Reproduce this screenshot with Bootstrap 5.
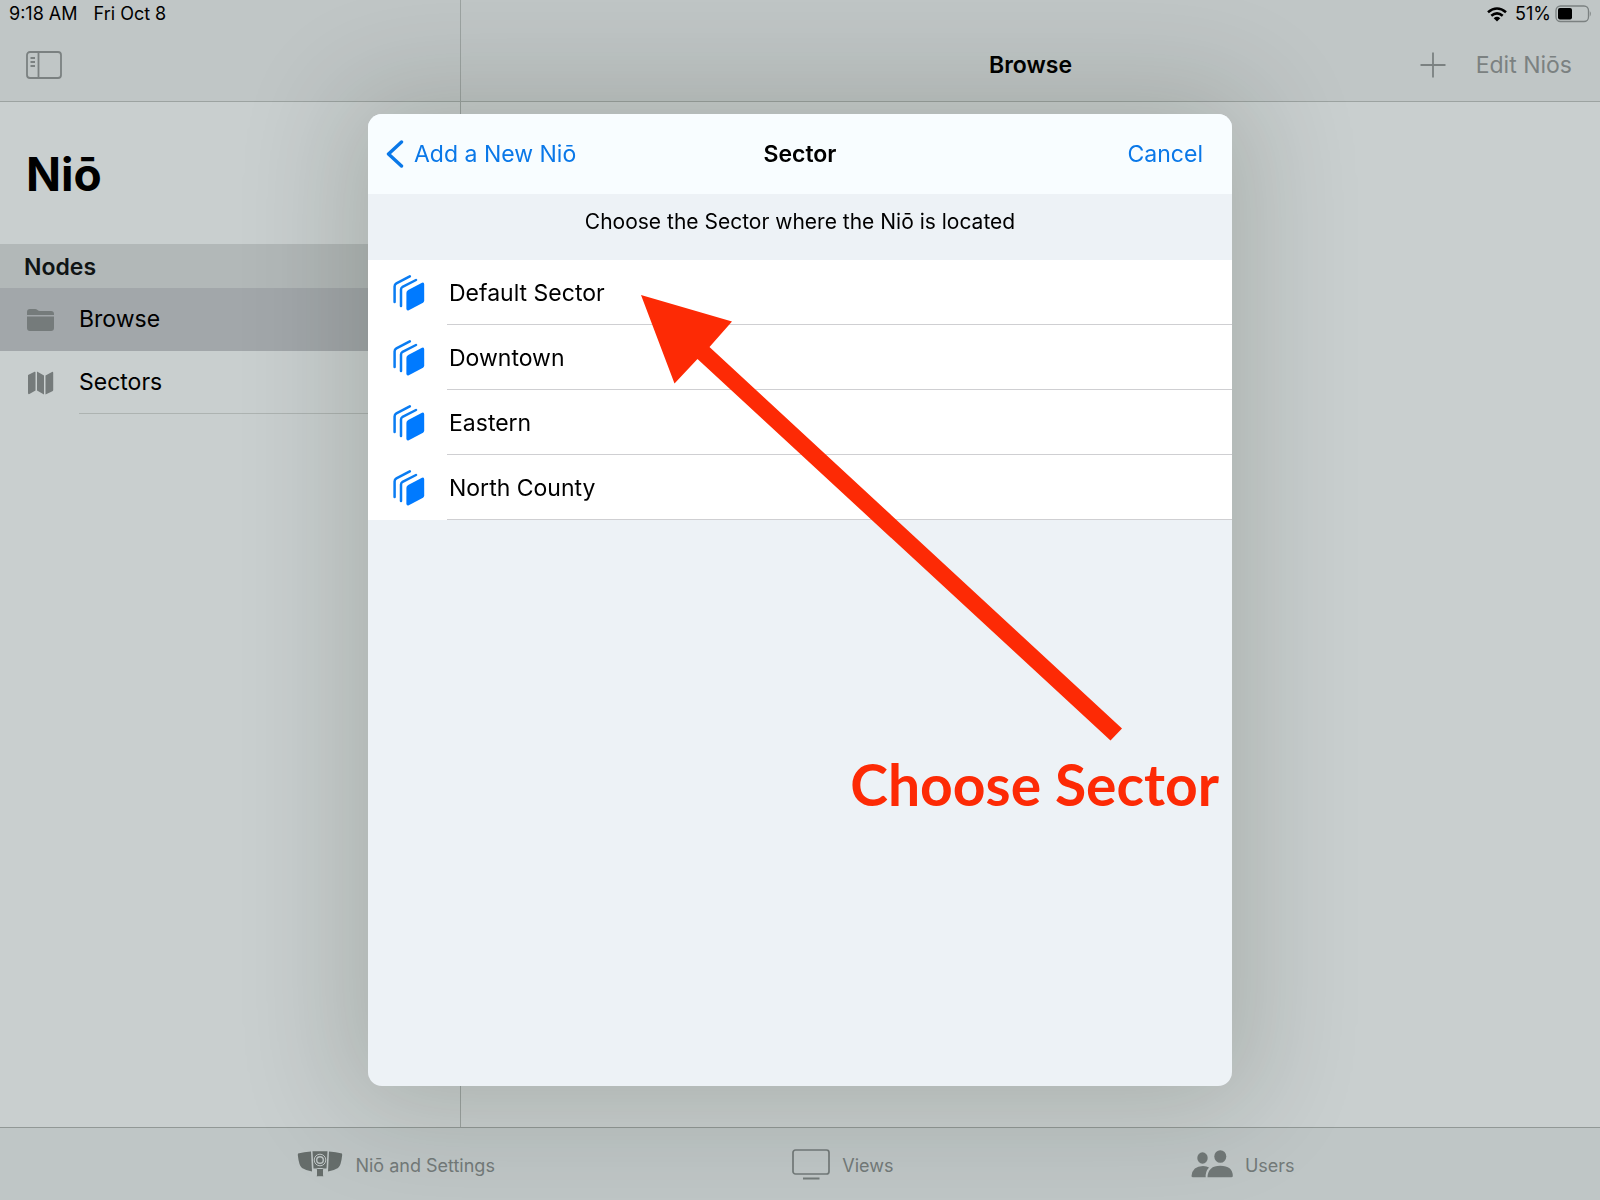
<!DOCTYPE html>
<html lang="en">
<head>
<meta charset="utf-8">
<meta name="viewport" content="width=device-width, initial-scale=1">
<title>Niō – Sector</title>
<link href="https://cdn.jsdelivr.net/npm/bootstrap@5.3.0/dist/css/bootstrap.min.css" rel="stylesheet">
<style>
  :root { --muted: #7b8181; --line: #9ca3a1; --ios-blue: #0a78e8; }
  body { font-family: Inter, "Liberation Sans", sans-serif; font-size: 23px; line-height: 32px; color: #000; background: #c9cfcf; }
  a, a:hover { color: inherit; text-decoration: none; }
  svg { display: block; flex: none; }
  .app-side { width: 461px; border-right: 1px solid var(--line); }
  .top-bar { height: 102px; background: #c0c6c6; border-bottom: 1px solid var(--line); }
  .status-line { height: 28px; font-size: 18px; line-height: 28px; padding: 0 9px; }
  .tool-line { height: 74px; color: var(--muted); }
  .bar-title { font-size: 23px; line-height: 32px; font-weight: 600; color: #000; }
  .app-title { font-size: 46px; line-height: 60px; font-weight: 700; padding: 42px 26px 40px; }
  .side-head { height: 44px; line-height: 46px; font-size: 23px; font-weight: 600; padding-left: 24px; background: #b2b8b8; color: #101414; }
  .side-item { height: 63px; padding-left: 26px; gap: 24px; }
  .side-item svg { width: 29px; color: #757b7b; }
  .side-item.active { background: #a2a7aa; }
  .side-text { height: 63px; line-height: 63px; }
  .side-line { border-bottom: 1px solid #adb3b1; }
  .tab-line { height: 73px; background: #bfc6c6; border-top: 1px solid #919896; color: #737a79; font-size: 18px; }
  .tab-link { gap: 12px; }
  .tab-text { padding-top: 4px; }
  .modal-dialog.sheet { max-width: 864px; margin: 114px auto; }
  .sheet .modal-content { height: calc(100vh - 228px); border: 0; border-radius: 14px; background: #edf2f6; color: #000;
    box-shadow: 0 0 110px 24px rgba(20,24,0,.16); }
  .sheet-bar { height: 80px; background: #f8fdff; border-radius: 14px 14px 0 0; padding: 0 18px; }
  .sheet-btn { border: 0; background: none; padding: 0; color: var(--ios-blue); }
  .sheet-cancel { padding-right: 11px; }
  .sheet-note { height: 66px; font-size: 21px; line-height: 56px; margin: 0; }
  .sector-item { border: 0; padding: 0 0 0 25px; height: 65px; gap: 22px; background: #fff; color: #000; }
  .sector-text { height: 65px; line-height: 67px; border-bottom: 1px solid #cfcfd2; padding-left: 2px; }
  .arrow-art { top: 0; left: 0; pointer-events: none; }
  .arrow-label { top: 636px; right: 13px; font-family: Lato, sans-serif; font-size: 57px; line-height: 68px; font-weight: 700; color: #fd2a05; pointer-events: none; white-space: nowrap; }
</style>
<script src="https://cdn.jsdelivr.net/npm/bootstrap@5.3.0/dist/js/bootstrap.bundle.min.js"></script>
</head>
<body>
<svg width="0" height="0" class="position-absolute" aria-hidden="true">
  <symbol id="books" viewBox="0 0 32 36">
    <path d="M15.2 15 29 7.8Q31.2 7 31.2 9.4V25.6Q31.2 27 30 27.8L15.8 35.2Q13.4 36 13.4 33.4V18Q13.4 16 15.2 15Z" fill="#007aff"/>
    <path d="M1.6 27V11.4Q1.6 9.4 3.4 8.4L16.8 1.4M8 31V14.6Q8 12.8 9.6 11.8L23 5" fill="none" stroke="#0a7cf2" stroke-width="2.5" stroke-linecap="round"/>
  </symbol>
</svg>

<div class="d-flex flex-column vh-100 overflow-hidden">
  <div class="d-flex flex-grow-1">
    <aside class="app-side flex-shrink-0">
      <header class="top-bar">
        <div class="status-line d-flex"><span class="me-3">9:18 AM</span><span>Fri Oct 8</span></div>
        <div class="tool-line d-flex align-items-center px-4">
          <button class="sheet-btn" type="button" aria-label="Toggle sidebar">
            <svg width="40" height="28" viewBox="0 0 40 28" fill="none" stroke="#7b8181" stroke-width="1.8"><rect x="3" y="1" width="34" height="26" rx="3"/><path d="M14.5 1v26M6.5 7h4.500M6.5 11h4.500M6.5 15h4.500"/></svg>
          </button>
        </div>
      </header>
      <h1 class="app-title m-0">Niō</h1>
      <h2 class="side-head m-0">Nodes</h2>
      <nav>
        <a href="#" class="side-item active d-flex align-items-center">
          <svg height="24" viewBox="0 0 29 24" fill="currentColor"><path d="M1 7V4Q1 1 4 1h5q1.500 0 2.500 1t2.500 1h11q3 0 3 3v1zM1 8.500h27V20q0 3-3 3H4q-3 0-3-3z"/></svg>
          <span class="side-text flex-grow-1">Browse</span>
        </a>
        <a href="#" class="side-item d-flex align-items-center">
          <svg height="24" viewBox="0 0 29 24" fill="currentColor"><path d="M2 4 8.500.8Q9.500.3 9.500 1.400V19.500L3.400 23Q2 23.500 2 22zM11 .5l7 4V23.500l-7-4zM19.500 4.500 26 .9q1.200-.4 1.200.8V19q0 .8-.8 1.200l-6.900 3.300z"/></svg>
          <span class="side-text side-line flex-grow-1">Sectors</span>
        </a>
      </nav>
    </aside>

    <main class="flex-grow-1">
      <header class="top-bar">
        <div class="status-line d-flex justify-content-end align-items-center gap-1">
          <svg class="me-1" width="20" height="15" viewBox="0 0 20 15" fill="none" stroke="#000" stroke-width="2.600"><path d="M1 5.300Q10-2.300 19 5.300M4.300 8.800Q10 4 15.700 8.800"/><path d="M6.700 11.200Q10 8.400 13.300 11.200L10 14.600Z" fill="#000" stroke="none"/></svg>
          <span>51%</span>
          <svg width="36" height="18" viewBox="0 0 36 18"><rect x="1" y="1" width="32.500" height="15.500" rx="4.500" fill="none" stroke="#7b8181" stroke-width="1.300"/><rect x="3" y="3" width="14" height="11.500" rx="2" fill="#000"/><path d="M34.800 6q2 2.700 0 5.600z" fill="#7b8181"/></svg>
        </div>
        <div class="tool-line d-flex align-items-center px-4">
          <div class="col"></div>
          <h2 class="bar-title m-0">Browse</h2>
          <div class="col d-flex justify-content-end align-items-center">
            <button class="sheet-btn me-3" type="button" aria-label="Add"><svg width="40" height="26" viewBox="0 0 40 26" stroke="#7b8181" stroke-width="1.800"><path d="M13 .5v25M.5 13h25"/></svg></button>
            <button class="sheet-btn text-reset pe-1" type="button">Edit Niōs</button>
          </div>
        </div>
      </header>
    </main>
  </div>

  <footer class="tab-line d-flex justify-content-evenly align-items-center flex-shrink-0 pe-2">
    <a href="#" class="tab-link d-flex align-items-center">
      <svg width="46" height="28" viewBox="0 0 46 28" fill="#666d6b"><path d="M1 3.500Q7 1.800 14 1.500L15 21.500Q9 20.500 5 18 2 16 .8 5zM45 3.500Q39 1.800 32 1.500L31 21.500q6-1 10-3.500 3-2 4.200-13zM15.500 1.200h15L29.500 18.500h-13z"/><rect x="19.500" y="18.500" width="7" height="8.300" rx="1" stroke="#bfc6c6"/><g fill="none" stroke="#bfc6c6"><circle cx="23" cy="10" r="5.800"/><circle cx="23" cy="10" r="3.300" stroke-width="1.400"/></g></svg>
      <span class="tab-text">Niō and Settings</span>
    </a>
    <a href="#" class="tab-link d-flex align-items-center">
      <svg width="38" height="31" viewBox="0 0 38 31" fill="none" stroke="#737a79" stroke-width="1.700"><rect x="1" y="1" width="36" height="24" rx="2.500"/><path d="M11 29.500h16.500" stroke-width="2"/></svg>
      <span class="tab-text">Views</span>
    </a>
    <a href="#" class="tab-link d-flex align-items-center">
      <svg width="42" height="28" viewBox="0 0 42 28" fill="#717877"><ellipse cx="11.500" cy="8" rx="5.200" ry="5.800"/><ellipse cx="29.300" cy="6.500" rx="6" ry="6.300"/><path d="M16.500 27.300Q17 15.800 29.300 15.800T41.800 26q0 1.300-1.500 1.300zM14.700 27.300H2Q.5 27.300.5 26 1.500 16 12 16q4 0 6 1.500-3.700 4-3.300 9.800z"/></svg>
      <span class="tab-text">Users</span>
    </a>
  </footer>
</div>

<div class="modal d-block overflow-hidden" tabindex="-1" role="dialog" aria-labelledby="sheetTitle">
  <div class="modal-dialog sheet">
    <div class="modal-content">
      <header class="sheet-bar d-flex align-items-center">
        <div class="col">
          <button class="sheet-btn d-flex align-items-center" type="button">
            <svg width="28" height="28" viewBox="0 0 28 28" fill="none" stroke="#0a78e8" stroke-width="3.400" stroke-linecap="round" stroke-linejoin="round"><path d="M15.500 2 2.500 14l13 12"/></svg>
            Add a New Niō
          </button>
        </div>
        <h2 id="sheetTitle" class="bar-title m-0">Sector</h2>
        <div class="col text-end"><button class="sheet-btn sheet-cancel" type="button">Cancel</button></div>
      </header>
      <p class="sheet-note text-center">Choose the Sector where the Niō is located</p>
      <div class="list-group list-group-flush">
        <a href="#" class="sector-item list-group-item d-flex align-items-center"><svg width="32" height="36"><use href="#books"/></svg><span class="sector-text flex-grow-1">Default Sector</span></a>
        <a href="#" class="sector-item list-group-item d-flex align-items-center"><svg width="32" height="36"><use href="#books"/></svg><span class="sector-text flex-grow-1">Downtown</span></a>
        <a href="#" class="sector-item list-group-item d-flex align-items-center"><svg width="32" height="36"><use href="#books"/></svg><span class="sector-text flex-grow-1">Eastern</span></a>
        <a href="#" class="sector-item list-group-item d-flex align-items-center"><svg width="32" height="36"><use href="#books"/></svg><span class="sector-text flex-grow-1">North County</span></a>
      </div>
      <svg class="arrow-art position-absolute" width="864" height="640" viewBox="0 0 864 640" aria-hidden="true"><path d="M273 181 364 207.500 341.500 233 754 614.500 742.500 626.500 329.500 245 306.500 269.500Z" fill="#fd2a05"/></svg>
      <div class="arrow-label position-absolute">Choose Sector</div>
    </div>
  </div>
</div>
</body>
</html>
